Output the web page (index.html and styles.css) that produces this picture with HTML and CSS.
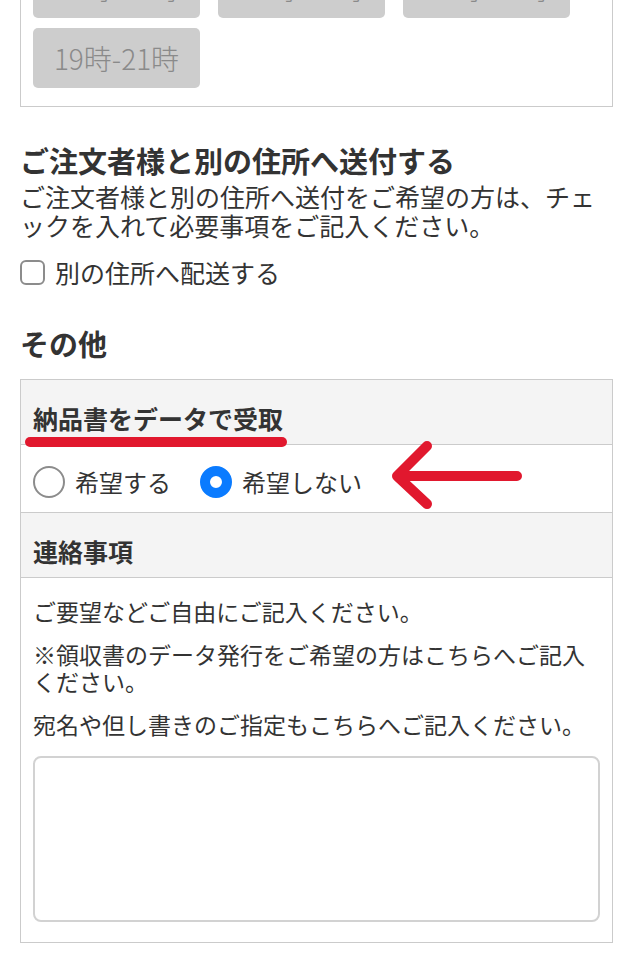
FILE: index.html
```html
<!DOCTYPE html>
<html lang="ja">
<head>
    <meta charset="UTF-8">
    <meta name="viewport" content="width=device-width, initial-scale=1.0">
    <title>ご注文手続き</title>
    <link rel="stylesheet" href="styles.css">
</head>
<body>

    <div class="box time-box">
        <div class="time-list">
            <button type="button" class="time-btn">14時-16時</button>
            <button type="button" class="time-btn">16時-18時</button>
            <button type="button" class="time-btn">18時-20時</button>
            <button type="button" class="time-btn">19時-21時</button>
        </div>
    </div>

    <h2 class="sec-title first">ご注文者様と別の住所へ送付する</h2>
    <p class="sec-desc">ご注文者様と別の住所へ送付をご希望の方は、チェックを入れて必要事項をご記入ください。</p>
    <label class="check-row">
        <input type="checkbox" name="other_address">
        <span>別の住所へ配送する</span>
    </label>

    <h2 class="sec-title">その他</h2>

    <div class="box panel">
        <div class="panel-head">
            納品書をデータで受取
            <span class="mark-line"></span>
        </div>
        <div class="panel-row radio-row">
            <label class="radio-item">
                <input type="radio" name="invoice_data" value="yes">
                <span>希望する</span>
            </label>
            <label class="radio-item">
                <input type="radio" name="invoice_data" value="no" checked>
                <span>希望しない</span>
            </label>
            <!-- annotation arrow -->
            <svg class="mark-arrow" width="520" height="67" viewBox="0 0 520 67">
                <path d="M496 31 L376 31 M406 1 L376 31 L406 59" fill="none" stroke="#e1182e" stroke-width="10" stroke-linecap="round" stroke-linejoin="round"/>
            </svg>
        </div>
        <div class="panel-head">連絡事項</div>
        <div class="panel-row notes">
            <p>ご要望などご自由にご記入ください。</p>
            <p>※領収書のデータ発行をご希望の方はこちらへご記入ください。</p>
            <p>宛名や但し書きのご指定もこちらへご記入ください。</p>
            <textarea name="message"></textarea>
        </div>
    </div>

</body>
</html>
```

FILE: styles.css
```css
body {
    margin: 0;
    padding: 0 20px;
    font-family: "Noto Sans CJK JP", "Noto Sans", sans-serif;
    color: #333;
    background: #fff;
}

.box {
    border: 1px solid #cbcbcb;
    background: #fff;
}

/* delivery time slots (scrolled past) */
.time-box {
    margin-top: -55px;
    padding: 12px 12px 18px;
}

.time-list {
    display: flex;
    flex-wrap: wrap;
    gap: 10px 18px;
}

.time-btn {
    width: 167px;
    height: 60px;
    border: none;
    border-radius: 5px;
    background: #cdcdcd;
    color: #8a8a8a;
    font-family: inherit;
    font-size: 28px;
    font-weight: 300;
    padding: 0;
}

.sec-title {
    margin: 38px 0 0;
    font-size: 29px;
    line-height: 36px;
    font-weight: bold;
    color: #333;
}

.sec-title.first {
    margin-top: 35px;
}

.sec-desc {
    margin: 4px 0 0;
    font-size: 25px;
    line-height: 29px;
    line-break: loose;
}

.check-row {
    display: flex;
    align-items: center;
    gap: 10px;
    margin-top: 17px;
    height: 30px;
    font-size: 25px;
}

.check-row input {
    appearance: none;
    -webkit-appearance: none;
    margin: 0;
    width: 25px;
    height: 25px;
    border: 2px solid #8c8c8c;
    border-radius: 6px;
    background: #fff;
}

.panel {
    margin-top: 18px;
}

.panel-head {
    position: relative;
    background: #f4f4f4;
    padding: 23px 12px 11px;
    font-size: 25px;
    line-height: 30px;
    font-weight: bold;
}

.panel > div + div {
    border-top: 1px solid #cbcbcb;
}

.mark-line {
    position: absolute;
    left: 4px;
    top: 57px;
    width: 262px;
    height: 10px;
    border-radius: 5px;
    background: #e1182e;
    z-index: 2;
}

.panel-row {
    position: relative;
    padding: 0 12px;
}

.radio-row {
    display: flex;
    align-items: center;
    gap: 29px;
    padding-top: 21px;
    padding-bottom: 14px;
}

.radio-item {
    display: flex;
    align-items: center;
    gap: 10px;
    font-size: 24px;
    line-height: 32px;
}

.radio-item input {
    appearance: none;
    -webkit-appearance: none;
    margin: 0;
    width: 32px;
    height: 32px;
    border: 2px solid #8c8c8c;
    border-radius: 50%;
    background: #fff;
}

.radio-item input:checked {
    border: 10px solid #0a7bff;
}

.mark-arrow {
    position: absolute;
    left: 0;
    top: 0;
    overflow: visible;
    z-index: 2;
}

.notes {
    padding-top: 20px;
    padding-bottom: 20px;
}

.notes p {
    margin: 0 0 16px;
    font-size: 23px;
    line-height: 27px;
}

.notes textarea {
    display: block;
    box-sizing: border-box;
    width: 100%;
    height: 166px;
    margin-top: 18px;
    border: 2px solid #d2d2d2;
    border-radius: 8px;
    resize: none;
}
```
